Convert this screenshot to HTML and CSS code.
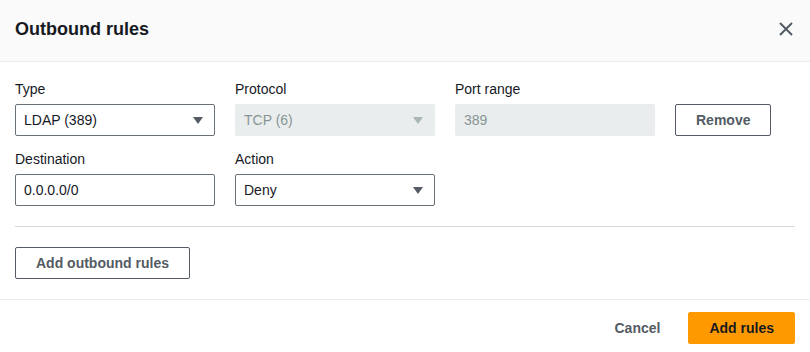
FILE: index.html
```html
<!DOCTYPE html>
<html lang="en">
<head>
    <meta charset="UTF-8">
    <title>Outbound rules</title>
    <link rel="stylesheet" href="styles.css">
</head>
<body>

<div class="modal">
    <div class="modal-header">
        <h2>Outbound rules</h2>
        <button class="close-btn" aria-label="Close">
            <svg width="14" height="14" viewBox="0 0 14 14">
                <path d="M1 1 L13 13 M13 1 L1 13" stroke="#545b64" stroke-width="2" fill="none"/>
            </svg>
        </button>
    </div>

    <div class="modal-body">
        <div class="rule-grid">
            <div class="field">
                <label>Type</label>
                <div class="select">
                    <span>LDAP (389)</span>
                    <span class="caret"></span>
                </div>
            </div>
            <div class="field">
                <label>Protocol</label>
                <div class="select disabled">
                    <span>TCP (6)</span>
                    <span class="caret"></span>
                </div>
            </div>
            <div class="field">
                <label>Port range</label>
                <div class="input disabled">389</div>
            </div>
            <div class="field field-action">
                <button class="btn">Remove</button>
            </div>

            <div class="field">
                <label>Destination</label>
                <div class="input">0.0.0.0/0</div>
            </div>
            <div class="field">
                <label>Action</label>
                <div class="select">
                    <span>Deny</span>
                    <span class="caret"></span>
                </div>
            </div>
        </div>

        <hr class="divider">

        <button class="btn">Add outbound rules</button>
    </div>

    <div class="modal-footer">
        <button class="btn-link">Cancel</button>
        <button class="btn btn-primary">Add rules</button>
    </div>
</div>

</body>
</html>
```

FILE: styles.css
```css
:root {
    --text-dark: #16191f;
    --text-grey: #545b64;
    --text-disabled: #879596;
    --border-input: #687078;
    --bg-disabled: #eaeded;
    --line: #eaeded;
    --orange: #ff9900;
}

* {
    margin: 0;
    padding: 0;
    box-sizing: border-box;
}

body {
    font-family: 'Liberation Sans', Arial, sans-serif;
    font-size: 14px;
    color: var(--text-dark);
    background: #ffffff;
}

.modal {
    width: 810px;
    height: 352px;
    display: flex;
    flex-direction: column;
}

.modal-header {
    height: 62px;
    background: #fafafa;
    border-bottom: 1px solid var(--line);
    display: flex;
    align-items: center;
    justify-content: space-between;
    padding: 0 15px 3px 15px;
}

.modal-header h2 {
    font-size: 18px;
    font-weight: 700;
    line-height: 22px;
}

.close-btn {
    background: none;
    border: none;
    width: 14px;
    height: 14px;
    margin-right: 2px;
    display: flex;
}

.modal-body {
    padding: 16px 15px 20px 15px;
    border-bottom: 1px solid var(--line);
}

.rule-grid {
    display: grid;
    grid-template-columns: 200px 200px 200px auto;
    column-gap: 20px;
    row-gap: 12px;
}

.field {
    display: flex;
    flex-direction: column;
}

.field label {
    line-height: 22px;
    margin-bottom: 4px;
}

.field-action {
    justify-content: flex-end;
    align-items: flex-start;
}

.select,
.input {
    height: 32px;
    border: 1px solid var(--border-input);
    border-radius: 2px;
    padding: 0 8px;
    display: flex;
    align-items: center;
    justify-content: space-between;
}

.select.disabled,
.input.disabled {
    background: var(--bg-disabled);
    border-color: var(--bg-disabled);
    color: var(--text-disabled);
}

.caret {
    width: 0;
    height: 0;
    border-left: 5px solid transparent;
    border-right: 5px solid transparent;
    border-top: 7px solid var(--text-grey);
    margin-right: 3px;
}

.disabled .caret {
    border-top-color: #aab7b8;
}

.divider {
    border: none;
    border-top: 1px solid #d5dbdb;
    margin: 20px 0;
}

.btn {
    height: 32px;
    padding: 0 20px;
    border: 1px solid var(--text-grey);
    border-radius: 2px;
    background: #ffffff;
    color: var(--text-grey);
    font-family: inherit;
    font-size: 14px;
    font-weight: 700;
}

.modal-footer {
    flex: 1;
    display: flex;
    justify-content: flex-end;
    align-items: flex-start;
    gap: 8px;
    padding: 12px 15px 0 15px;
}

.btn-link {
    height: 32px;
    padding: 0 20px;
    border: none;
    background: none;
    color: var(--text-grey);
    font-family: inherit;
    font-size: 14px;
    font-weight: 700;
}

.btn-primary {
    background: var(--orange);
    border-color: var(--orange);
    color: var(--text-dark);
}
```
